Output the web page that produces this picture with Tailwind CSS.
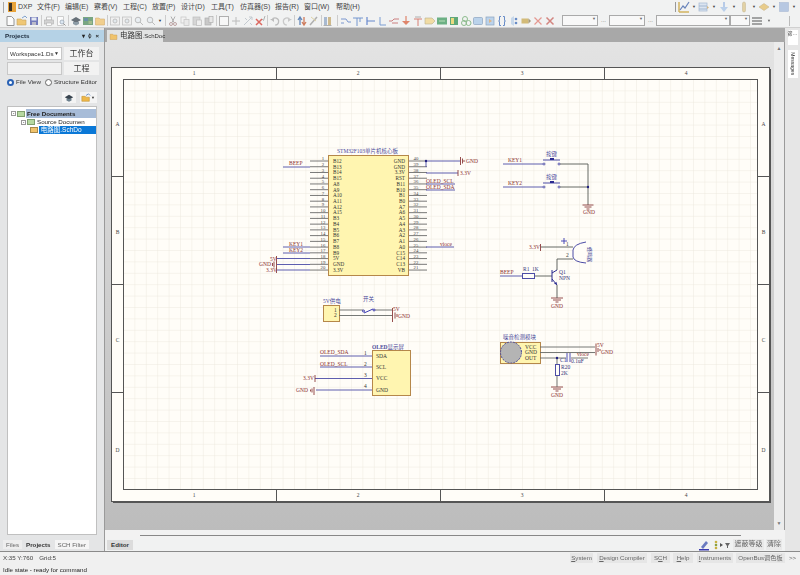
<!DOCTYPE html>
<html lang="zh">
<head>
  <meta charset="UTF-8">
  <title>电路图.SchDoc</title>
  <script src="https://cdn.jsdelivr.net/npm/@tailwindcss/browser@4"></script>
</head>
<body class="w-[800px] h-[575px] overflow-hidden bg-[#eef0f0] text-[6.2px] text-[#333] blur-[0.35px] whitespace-nowrap font-['Liberation_Sans','Noto_Sans_CJK_SC',sans-serif]">

<!-- toolbar icons -->
<svg class="hidden">
  <symbol id="new" viewBox="0 0 12 12"><path d="M3 1.5h4.5L10 4v6.5H3z" fill="#fff" stroke="#777"/></symbol>
  <symbol id="open" viewBox="0 0 12 12"><path d="M1 4h4l1 1h4v5H1z" fill="#eeb84a" stroke="#b98a2c" stroke-width=".6"/><path d="M6 3l3-2 2 2" fill="none" stroke="#5a86c0"/></symbol>
  <symbol id="save" viewBox="0 0 12 12"><rect x="2" y="2" width="8" height="8" fill="#4a55a8"/><rect x="3.5" y="2.5" width="5" height="3" fill="#dfe4f2"/><rect x="4" y="7" width="4" height="3" fill="#aab"/></symbol>
  <symbol id="print" viewBox="0 0 12 12"><path d="M3.5 2h5v3h-5z" fill="#fff" stroke="#999" stroke-width=".7"/><rect x="1.5" y="5" width="9" height="4" fill="#c9c9c9" stroke="#999" stroke-width=".6"/><rect x="3.5" y="8" width="5" height="2.5" fill="#fff" stroke="#999" stroke-width=".6"/></symbol>
  <symbol id="preview" viewBox="0 0 12 12"><path d="M2.5 1.5h6v9h-6z" fill="#fff" stroke="#aaa" stroke-width=".7"/><circle cx="7" cy="7" r="2" fill="#d5e3f2" stroke="#789" stroke-width=".7"/><path d="M8.5 8.5l2 2" stroke="#777"/></symbol>
  <symbol id="cap" viewBox="0 0 12 12"><path d="M1 5l5-3 5 3-5 3z" fill="#38444f"/><path d="M3 7v2l3 1.5L9 9V7" fill="#6b7f8c"/></symbol>
  <symbol id="chips" viewBox="0 0 12 12"><rect x="1" y="2" width="10" height="8" fill="#4f8d5c"/><rect x="2" y="3" width="4" height="3" fill="#3c6f8e"/><rect x="6.5" y="6" width="3.5" height="3" fill="#86a86b"/></symbol>
  <symbol id="folder" viewBox="0 0 12 12"><path d="M1.5 3h3.500l1 1h4.500v6h-9z" fill="#f0c36c" stroke="#c9974a" stroke-width=".6"/></symbol>
  <symbol id="zoomfit" viewBox="0 0 12 12"><rect x="1.500" y="2" width="9" height="8" fill="#eee" stroke="#aaa" stroke-width=".7"/><circle cx="6" cy="6" r="2" fill="#dde5ea" stroke="#999" stroke-width=".7"/></symbol>
  <symbol id="zoomin" viewBox="0 0 12 12"><circle cx="5" cy="5" r="2.800" fill="#e6edf2" stroke="#aaa"/><path d="M7 7l3 3" stroke="#aaa"/></symbol>
  <symbol id="cut" viewBox="0 0 12 12"><path d="M4 1.500l3 6M8 1.500l-3 6" stroke="#999"/><circle cx="4" cy="9" r="1.500" fill="none" stroke="#a88"/><circle cx="8" cy="9" r="1.500" fill="none" stroke="#a88"/></symbol>
  <symbol id="copy" viewBox="0 0 12 12"><rect x="2" y="2" width="5" height="6" fill="#f2f2f2" stroke="#b5b5b5" stroke-width=".7"/><rect x="5" y="4.500" width="5" height="6" fill="#e6e6e6" stroke="#b5b5b5" stroke-width=".7"/></symbol>
  <symbol id="paste" viewBox="0 0 12 12"><rect x="2" y="2" width="7" height="8" fill="#ccc" stroke="#aaa" stroke-width=".7"/><rect x="5.500" y="5" width="5" height="5.500" fill="#eee" stroke="#aaa" stroke-width=".7"/></symbol>
  <symbol id="stamp" viewBox="0 0 12 12"><rect x="2" y="3" width="6" height="7" fill="#bbb" stroke="#999" stroke-width=".7"/><rect x="6" y="1.500" width="4" height="6" fill="#e5e5e5" stroke="#999" stroke-width=".7"/></symbol>
  <symbol id="rect" viewBox="0 0 12 12"><rect x="1.500" y="1.500" width="9" height="9" fill="#f8f8f8" stroke="#999"/></symbol>
  <symbol id="cross" viewBox="0 0 12 12"><path d="M6 2v8M2 6h8" stroke="#aaa"/></symbol>
  <symbol id="xmove" viewBox="0 0 12 12"><path d="M2 10l8-8M7 2h3v3" fill="none" stroke="#b5bcc4"/><path d="M3 3l2 2M8 8l2 2" stroke="#b5bcc4"/></symbol>
  <symbol id="xred" viewBox="0 0 12 12"><path d="M2 4l6 6M8 4l-6 6" stroke="#d43a2f" stroke-width="1.500"/><path d="M8 4l1.500 1.500L11 1" fill="none" stroke="#999"/></symbol>
  <symbol id="undo" viewBox="0 0 12 12"><path d="M3 5a3.500 3.500 0 1 1 3 5" fill="none" stroke="#aaa" stroke-width="1.200"/><path d="M1 4h4v3z" fill="#aaa"/></symbol>
  <symbol id="redo" viewBox="0 0 12 12"><path d="M9 5a3.500 3.500 0 1 0-3 5" fill="none" stroke="#bbb" stroke-width="1.200"/><path d="M11 4H7v3z" fill="#bbb"/></symbol>
  <symbol id="updown" viewBox="0 0 12 12"><path d="M4 10V3M2 5l2-3 2 3" fill="none" stroke="#3465a8" stroke-width="1.300"/><path d="M8 2v7M6 7l2 3 2-3" fill="none" stroke="#c2552c" stroke-width="1.300"/></symbol>
  <symbol id="wand" viewBox="0 0 12 12"><path d="M2 10l7-8" stroke="#999" stroke-width="1.500"/><path d="M3 2l5 4" stroke="#d8c98a"/></symbol>
  <symbol id="binoc" viewBox="0 0 12 12"><rect x="2" y="2" width="3" height="8" fill="#8fa6c4"/><rect x="6" y="2" width="3" height="8" fill="#c2a66a"/><rect x="1.500" y="10" width="8" height="1" fill="#999"/></symbol>
  <symbol id="wire" viewBox="0 0 12 12"><path d="M1 4h5l2 3h3M1 8h3" fill="none" stroke="#5479c4"/></symbol>
  <symbol id="bus" viewBox="0 0 12 12"><path d="M1 3h10M5 3v8M8 3v4" fill="none" stroke="#4d78c4"/></symbol>
  <symbol id="hbar" viewBox="0 0 12 12"><path d="M3 2v8M3 6h8" fill="none" stroke="#3b66c0" stroke-width="1.200"/></symbol>
  <symbol id="corner" viewBox="0 0 12 12"><path d="M4 2v8M4 10h6" fill="none" stroke="#5480c8"/></symbol>
  <symbol id="bent" viewBox="0 0 12 12"><path d="M1 6h3l2-2h5M4 8h6" fill="none" stroke="#c05a5a"/></symbol>
  <symbol id="gnd" viewBox="0 0 12 12"><path d="M6 1v6" stroke="#d9603e" stroke-width="1.200"/><path d="M2 6h8L6 10z" fill="#d9603e"/></symbol>
  <symbol id="vcc" viewBox="0 0 12 12"><path d="M2 4h8M6 4v7" stroke="#cf5a4a"/><path d="M3 2h6" stroke="#999"/></symbol>
  <symbol id="tag" viewBox="0 0 12 12"><path d="M1 3h7l3 3-3 3H1z" fill="#f0d48a" stroke="#aa9a6a" stroke-width=".6"/></symbol>
  <symbol id="greenb" viewBox="0 0 12 12"><rect x="1" y="2.500" width="10" height="7" fill="#3f9a5f"/><path d="M3 6h6" stroke="#a8d8a8"/></symbol>
  <symbol id="yellowg" viewBox="0 0 12 12"><rect x="2" y="2" width="8" height="8" fill="#2f8f50"/><rect x="3" y="3" width="3" height="6" fill="#e8d25a"/></symbol>
  <symbol id="rings" viewBox="0 0 12 12"><circle cx="5" cy="4" r="2.500" fill="none" stroke="#6aa86a"/><circle cx="4" cy="8" r="2.500" fill="none" stroke="#6aa86a"/><circle cx="8.500" cy="8" r="2.500" fill="none" stroke="#6aa86a"/></symbol>
  <symbol id="bluebox" viewBox="0 0 12 12"><rect x="1.500" y="2.500" width="9" height="7" rx="1" fill="#a9c8e8" stroke="#6a8ab0" stroke-width=".7"/></symbol>
  <symbol id="sheet" viewBox="0 0 12 12"><rect x="2" y="2" width="8" height="8" fill="#a9c8e8" stroke="#6a8ab0" stroke-width=".7"/><path d="M5 4l3 2-3 2z" fill="#d8a060"/></symbol>
  <symbol id="brace" viewBox="0 0 12 12"><path d="M5 1.500H3.500v4L2.500 6l1 .5v4H5M7 1.500h1.500v4l1 .5-1 .5v4H7" fill="none" stroke="#3a6ab8"/></symbol>
  <symbol id="arrows" viewBox="0 0 12 12"><path d="M3 3l3-2v10l-3-2z" fill="#b8cfe8"/><circle cx="8" cy="4" r="1.300" fill="#3a6ab8"/><circle cx="8" cy="8" r="1.300" fill="#3a6ab8"/></symbol>
  <symbol id="pencil" viewBox="0 0 12 12"><rect x="1.500" y="3.500" width="7" height="5" fill="#c9a850"/><path d="M8.500 3.500L11 6 8.500 8.500z" fill="#8a7a50"/></symbol>
  <symbol id="xpale" viewBox="0 0 12 12"><path d="M2.500 2.500l7 7M9.500 2.500l-7 7" stroke="#e07a70" stroke-width="1.200"/></symbol>
  <symbol id="xbox" viewBox="0 0 12 12"><path d="M2.500 2.500l7 7M9.500 2.500l-7 7" stroke="#c9605a" stroke-width="1.500"/></symbol>
  <symbol id="chart" viewBox="0 0 12 12"><path d="M1 11V1M1 11h10" stroke="#c9a030" stroke-width="1.500"/><path d="M2 9l3-4 2 2 4-6" fill="none" stroke="#3a5ea8" stroke-width="1.200"/></symbol>
  <symbol id="stack" viewBox="0 0 12 12"><rect x="1" y="2" width="8" height="8" fill="#d4e0f0" stroke="#8aa5c8" stroke-width=".7"/><path d="M1 5h8M1 8h8" stroke="#8aa5c8"/><path d="M9 5l2 1.500L9 8z" fill="#c9a060"/></symbol>
  <symbol id="down" viewBox="0 0 12 12"><path d="M6 1v8" stroke="#8aaee0" stroke-width="1.500"/><path d="M2 6h8l-4 5z" fill="#a8c4e8"/></symbol>
  <symbol id="vtan" viewBox="0 0 12 12"><rect x="4.500" y="1" width="3" height="10" rx="1.500" fill="#ddc68a" stroke="#b5a070" stroke-width=".5"/></symbol>
  <symbol id="diamond" viewBox="0 0 12 12"><path d="M1 6l5-3.500L11 6 6 9.500z" fill="#e6c069" stroke="#b59a60" stroke-width=".5"/></symbol>
  <symbol id="square" viewBox="0 0 12 12"><rect x="1.500" y="1.500" width="9" height="9" fill="#a4bbdd" stroke="#8aa0c4" stroke-width=".5"/></symbol>
  <symbol id="lines" viewBox="0 0 12 12"><path d="M1 3h10M1 6h10M1 9h10" stroke="#555" stroke-width="1.200"/></symbol>
</svg>

<!-- menu bar -->
<header class="flex items-center h-[14px] pl-[3px] bg-[#f1f2f2] text-[7px] text-[#444]">
  <span class="w-px h-[11px] bg-[#aaa] mr-1"></span>
  <svg class="w-[8px] h-[10px] shrink-0" viewBox="0 0 8 10"><rect width="8" height="10" fill="#e8a33a"/><rect x="1" y="1" width="3" height="8" fill="#3a3024"/></svg>
  <span class="ml-[2px] w-[19px]">DXP</span>
  <span class="w-[28px]">文件(F)</span>
  <span class="w-[29px]">编辑(E)</span>
  <span class="w-[29px]">察看(V)</span>
  <span class="w-[29px]">工程(C)</span>
  <span class="w-[29px]">放置(P)</span>
  <span class="w-[30px]">设计(D)</span>
  <span class="w-[29px]">工具(T)</span>
  <span class="w-[35px]">仿真器(S)</span>
  <span class="w-[29px]">报告(R)</span>
  <span class="w-[32px]">窗口(W)</span>
  <span>帮助(H)</span>
  <div class="ml-auto flex items-center pr-[2px]" id="topIcons">
    <span class="w-px h-[10px] bg-[#999] mr-[2px]"></span>
  </div>
</header>

<!-- tool bar -->
<div id="tools" class="flex items-center h-[14px] pl-[4px] bg-[#f1f2f2] border-b border-[#d0d0d0]"></div>

<div class="flex h-[523px]">
  <!-- projects panel -->
  <aside class="w-[105px] shrink-0 flex flex-col pt-[2px] bg-[#e4e5e6] border-r border-[#9a9a9a]">
    <div class="flex items-center h-[12px] px-[5px] bg-[#b5d2e6] text-[#1c2a3a] font-bold">
      <span>Projects</span>
      <span class="ml-auto flex items-center gap-[3px] text-[6px] text-[#222]"><span>▾</span><span>ᛰ</span><span>×</span></span>
    </div>
    <div class="flex flex-col px-[7px] pt-[5px] flex-1">
      <div class="flex gap-[2px]">
        <div class="w-[55px] shrink-0 h-[13px] flex items-center justify-between px-[2px] bg-white border border-[#c8c8c8]"><span>Workspace1.Ds</span><span class="text-[5px]">▼</span></div>
        <button class="w-[35px] shrink-0 h-[13px] bg-[#f2f2f2] text-[8px]">工作台</button>
      </div>
      <div class="flex gap-[2px] mt-[2px]">
        <div class="w-[55px] shrink-0 h-[13px] bg-[#f1f1f1] border border-[#c8c8c8]"></div>
        <button class="w-[35px] shrink-0 h-[13px] bg-[#f2f2f2] text-[8px]">工程</button>
      </div>
      <div class="flex items-center mt-px h-[12px]">
        <span class="w-[7px] h-[7px] rounded-full bg-white border-2 border-[#2a62b5]"></span>
        <span class="ml-[2px]">File View</span>
        <span class="ml-[4px] w-[7px] h-[7px] rounded-full bg-white border border-[#666]"></span>
        <span class="ml-[2px]">Structure Editor</span>
      </div>
      <div class="flex justify-end gap-[4px] mt-[4px]">
        <div class="w-[14px] h-[11px] bg-[#f4f4f4] flex justify-center items-center"><svg class="w-[10px] h-[10px]"><use href="#cap"/></svg></div>
        <div class="w-[17px] h-[11px] bg-[#f4f4f4] flex items-center pl-px"><svg class="w-[10px] h-[10px]"><use href="#open"/></svg><span class="text-[4px]">▼</span></div>
      </div>
      <div class="mt-[3px] h-[429px] bg-white border border-[#c0c0c0] pt-[2px] text-[#222]">
        <div class="flex items-center h-[9px] pl-[3px]">
          <span class="w-[5px] h-[5px] border border-[#999] text-[5px] leading-[3px] text-center">-</span>
          <span class="w-[8px] h-[6px] ml-px bg-[#b6d8a0] border border-[#7f9f6f]"></span>
          <span class="ml-px pl-px w-[71px] bg-[#a7bcd8] font-bold leading-[9px]">Free Documents</span>
        </div>
        <div class="flex items-center h-[8px] pl-[13px]">
          <span class="w-[5px] h-[5px] border border-[#999] text-[5px] leading-[3px] text-center">-</span>
          <span class="w-[8px] h-[6px] ml-px bg-[#b6d8a0] border border-[#7f9f6f]"></span>
          <span class="ml-[2px]">Source Documen</span>
        </div>
        <div class="flex items-center h-[8px] pl-[22px]">
          <span class="w-[8px] h-[6px] bg-[#f0c36c] border border-[#a8894a]"></span>
          <span class="ml-px pl-[2px] w-[59px] bg-[#0a78d7] text-white text-[6.500px] leading-[8px]">电路图.SchDo</span>
        </div>
      </div>
    </div>
    <div class="flex items-center h-[16px] pl-[3px] pt-[5px] pb-[2px] gap-[1px] text-[#666]">
      <span class="px-[3px] h-[9px] leading-[9px] bg-[#eee]">Files</span>
      <span class="px-[3px] h-[9px] leading-[9px] font-bold text-[#333]">Projects</span>
      <span class="px-[3px] h-[9px] leading-[9px] bg-[#f5f5f5]">SCH Filter</span>
    </div>
  </aside>

  <!-- document area -->
  <main class="flex-1 flex flex-col min-w-0 bg-[#e8e8e8]">
    <div class="flex items-end h-[14px] bg-[#a8a8a8] pl-[2px]">
      <div class="flex items-center gap-[2px] h-[12px] w-[56px] pl-[2px] bg-[#e2e3e3]">
        <svg class="w-[9px] h-[9px] shrink-0"><use href="#folder"/></svg>
        <span class="text-[7.500px]">电路图<span class="text-[6px]">.SchDoc</span></span>
      </div>
    </div>
    <div class="flex flex-1 min-h-0">
      <svg id="sheet" class="w-[669px] h-[488px] shrink-0" viewBox="105 42 669 488" font-family="'Liberation Serif','Noto Sans CJK SC',serif" font-size="5.500">
        <defs>
          <linearGradient id="back" x1="0" y1="0" x2="0" y2="1"><stop offset="0" stop-color="#e3e3e3"/><stop offset="1" stop-color="#bcbcbc"/></linearGradient>
          <pattern id="grid" x="123" y="79" width="11.400" height="11.400" patternUnits="userSpaceOnUse"><path d="M11.400 0H0V11.400" fill="none" stroke="#ece8de" stroke-width=".9"/></pattern>
        </defs>
        <rect x="105" y="42" width="669" height="488" fill="url(#back)"/>
        <rect x="113" y="69" width="658" height="434" fill="#555"/>
        <rect x="111.500" y="67.500" width="658" height="434" fill="#fffdf8" stroke="#555"/>
        <rect x="123.500" y="79.500" width="634" height="410" fill="#fffdf8"/>
        <rect x="123.500" y="79.500" width="634" height="410" fill="url(#grid)" stroke="#555"/>
        <g stroke="#555" fill="none">
          <path d="M276.500 68v11M440.500 68v11M604.500 68v11M276.500 490v11M440.500 490v11M604.500 490v11"/>
          <path d="M112 176.500h11M112 284.500h11M112 392.500h11M758 176.500h11M758 284.500h11M758 392.500h11"/>
        </g>
        <g fill="#444" text-anchor="middle">
          <text x="194" y="75">1</text><text x="358" y="75">2</text><text x="522" y="75">3</text><text x="686" y="75">4</text>
          <text x="194" y="497">1</text><text x="358" y="497">2</text><text x="522" y="497">3</text><text x="686" y="497">4</text>
          <text x="117.500" y="126">A</text><text x="117.500" y="234">B</text><text x="117.500" y="342">C</text><text x="117.500" y="452">D</text>
          <text x="763.500" y="126">A</text><text x="763.500" y="234">B</text><text x="763.500" y="342">C</text><text x="763.500" y="452">D</text>
        </g>

        <!-- MCU module -->
        <rect x="328.500" y="155.500" width="80" height="120" fill="#fff5b0" stroke="#b5874a"/>
        <text x="337" y="153" fill="#4a4a9a">STM32F103单片机核心板</text>
        <g id="pins" font-size="5.200"></g>

        <g stroke="#4c4ca6" stroke-width=".9" fill="none">
          <path d="M283 167h27M283 247h27M283 253h27M277 258.500h33M277 264.500h33M277 270h33"/>
          <path d="M426 161h34M426 161v6M426 173h32M426 184h29M426 190h29M426 247h28"/>
        </g>
        <circle cx="426" cy="161" r="1.200" fill="#202080"/>
        <g stroke="#8b3a3a" stroke-width=".9" fill="none">
          <path d="M276.500 256v17M274 261.500v6M272.500 263v3M458 170v6M460.500 157v8M462.500 158.500v5M464 160v2"/>
        </g>
        <g fill="#8b3030">
          <text x="289" y="165">BEEP</text><text x="289" y="245.500">KEY1</text><text x="289" y="251.500">KEY2</text>
          <text x="270" y="260.500">5V</text><text x="259" y="266">GND</text><text x="266" y="271.500">3.3V</text>
          <text x="466" y="163">GND</text><text x="460" y="175">3.3V</text>
          <text x="426" y="183">OLED_SCL</text><text x="426" y="189">OLED_SDA</text><text x="440" y="245.500">vioce</text>
        </g>

        <!-- keys -->
        <g stroke="#4c4ca6" stroke-width=".9" fill="none">
          <path d="M503 164h40M503 187h40"/>
          <circle cx="544" cy="164" r="1"/><circle cx="559" cy="164" r="1"/><circle cx="544" cy="187" r="1"/><circle cx="559" cy="187" r="1"/>
          <path d="M543 160h17M543 183h17" stroke-width="1.200"/>
        </g>
        <path d="M550 158h4v2h-4zM550 181h4v2h-4z" fill="#2a2a90"/>
        <path d="M560 164h28v41M560 187h28" fill="none" stroke="#555a55" stroke-width=".9"/>
        <circle cx="588" cy="187" r="1.200" fill="#202080"/>
        <g stroke="#8b3a3a" stroke-width=".9"><path d="M582.500 205h11M584.500 207h7M586.500 209h3M551 298h12M553 300h8M555.500 302h3M551 387h12M553 389h8M555.500 391h3"/></g>
        <g fill="#8b3030"><text x="508" y="162">KEY1</text><text x="508" y="185">KEY2</text><text x="583" y="214">GND</text></g>
        <g fill="#4a4a9a"><text x="546" y="156">按键</text><text x="546" y="179">按键</text></g>

        <!-- buzzer -->
        <path d="M541 247h32M557 259h16M557 259v11M557 285v13M535 276h17" stroke="#555a55" stroke-width=".9" fill="none"/>
        <path d="M540.500 244v7" stroke="#8b3a3a" stroke-width=".9"/>
        <path d="M561 241h6M564 238v6" stroke="#3a3ab0" stroke-width=".9"/>
        <path d="M586 242Q574 244 573 250V257Q574 262 586 263" fill="#fffdf8" stroke="#4c4ca6"/>
        <text transform="translate(588 247) rotate(90)" fill="#4a4a9a" font-size="5">蜂鸣器</text>
        <path d="M500 276h22" stroke="#4c4ca6" stroke-width=".9"/>
        <rect x="522.500" y="273.500" width="12" height="5" fill="#fffdf8" stroke="#4c4ca6"/>
        <path d="M552 270v12M552 273l5-3M552 279l5 6" stroke="#2a2a90" fill="none"/>
        <path d="M554 283.500l3 1.500-.5-3z" fill="#2a2a90"/>
        <g fill="#444"><text x="529" y="248.500" fill="#8b3030">3.3V</text><text x="566" y="246">1</text><text x="566" y="257">2</text></g>
        <g fill="#8b3030"><text x="500" y="273.500">BEEP</text><text x="551" y="307.500">GND</text></g>
        <g fill="#33337a"><text x="523" y="271">R1</text><text x="532" y="271">1K</text><text x="559" y="274">Q1</text><text x="559" y="280">NPN</text></g>

        <!-- power switch -->
        <rect x="323.500" y="305.500" width="16" height="16" fill="#fff5b0" stroke="#b5874a"/>
        <text x="323" y="303" fill="#4a4a9a">5V供电</text>
        <text x="334" y="312" fill="#333">1</text><text x="334" y="317" fill="#333">2</text>
        <path d="M339 310h24M375 310h17M339 315.500h53" stroke="#666a66" stroke-width=".9" fill="none"/>
        <path d="M364 313l9-4" stroke="#3a3ab0"/><circle cx="363.500" cy="311" r="1" fill="none" stroke="#3a3ab0"/><circle cx="374" cy="310" r="1" fill="none" stroke="#3a3ab0"/>
        <path d="M392.500 308v14M395 312.500v6M397 314v3" stroke="#8b3a3a" stroke-width=".9"/>
        <text x="363" y="301" fill="#4a4a9a">开关</text>
        <text x="393" y="311" fill="#8b3030">5V</text><text x="398" y="317.500" fill="#8b3030">GND</text>

        <!-- OLED -->
        <rect x="372.500" y="350.500" width="38" height="45" fill="#fff5b0" stroke="#b5874a"/>
        <text x="372" y="348.500" fill="#4a4a9a"><tspan font-weight="bold">OLED</tspan>显示屏</text>
        <g fill="#333"><text x="376" y="358">SDA</text><text x="376" y="369">SCL</text><text x="376" y="380">VCC</text><text x="376" y="391.500">GND</text>
        <text x="364" y="354.500">1</text><text x="364" y="366">2</text><text x="364" y="377">3</text><text x="364" y="388">4</text></g>
        <path d="M320 356h52M320 367h52M315 378.500h57M316 390h56" stroke="#4c4ca6" stroke-width=".9"/>
        <path d="M315 375v7M314 387v8M312 388.500v4M310.500 389.500v2" stroke="#8b3a3a" stroke-width=".9"/>
        <g fill="#8b3030"><text x="320" y="354">OLED_SDA</text><text x="320" y="365.500">OLED_SCL</text><text x="303" y="380">3.3V</text><text x="296" y="391.500">GND</text></g>

        <!-- sound sensor -->
        <rect x="500.500" y="342.500" width="40" height="21" fill="#fff5b0" stroke="#b5874a"/>
        <circle cx="511" cy="352.500" r="10.500" fill="#b4b4b4" stroke="#4a4a9a" stroke-dasharray="2 1"/>
        <text x="503" y="339" fill="#4a4a9a">噪音检测模块</text>
        <g fill="#333"><text x="525" y="348.500">VCC</text><text x="525" y="354">GND</text><text x="525" y="359.500">OUT</text></g>
        <path d="M540 347h55M540 352.500h55M540 358h26M571 358h17M557 358v6M557 375v12" stroke="#666a66" stroke-width=".9" fill="none"/>
        <path d="M596 343.500v12M598 348v4M600 349v2" stroke="#8b3a3a" stroke-width=".9"/>
        <path d="M567 353v9M570 353v9" stroke="#3a3ab0" stroke-width=".9"/>
        <circle cx="557" cy="358" r="1.200" fill="#202080"/>
        <rect x="555.500" y="364.500" width="4" height="11" fill="#fffdf8" stroke="#4c4ca6"/>
        <g fill="#33337a"><text x="560" y="362">C1</text><text x="571" y="362.500">0.1uF</text><text x="561" y="369">R20</text><text x="561" y="375">2K</text></g>
        <g fill="#8b3030"><text x="597" y="347">5V</text><text x="601" y="354">GND</text><text x="577" y="356">vioce</text><text x="551" y="397">GND</text></g>
      </svg>
      <div class="flex-1 flex flex-col items-center bg-[#ececec] border-r border-[#9a9a9a] text-[5px] text-[#777] py-[3px]">
        <span>▲</span>
        <span class="mt-auto">▼</span>
      </div>
    </div>
    <div class="h-[9px] bg-[#f2f2f2] pt-[5px] pl-[35px] pr-[44px]"><div class="h-[1px] bg-[#888]"></div></div>
    <div class="flex items-center h-[12px] pb-px bg-[#f1f2f2]">
      <span class="ml-[2px] px-[4px] h-[10px] leading-[10px] bg-[#dcdcdc] font-bold">Editor</span>
      <div class="ml-auto flex items-center gap-[2px] pr-[3px] text-[#666]">
        <svg class="w-[12px] h-[12px] shrink-0" viewBox="0 0 12 12"><path d="M3 8l5-6 2 2-5 6z" fill="#6a7ac0"/><path d="M1 10h10v1.500H1z" fill="#3a3ab0"/></svg>
        <svg class="ml-[2px] w-[17px] h-[10px] shrink-0" viewBox="0 0 17 10"><circle cx="2" cy="2" r="1.300" fill="#c9b040"/><circle cx="2" cy="5" r="1.300" fill="#8aa040"/><circle cx="2" cy="8" r="1.300" fill="#c9b040"/><path d="M6 3l3 2-3 2z" fill="#555"/><path d="M11 3h5l-2 3v2h-1V6z" fill="#666"/></svg>
        <span class="w-[31px] text-[7px] text-center bg-[#e9e9e9]">遮蔽等级</span>
        <span class="w-[16px] text-[7px] text-center bg-[#e9e9e9]">清除</span>
      </div>
    </div>
  </main>

  <!-- right dock -->
  <div class="w-[15px] shrink-0 flex flex-col items-center pt-[2px] gap-[5px] bg-[#e6e6e6]">
    <span class="w-[10px] h-[15px] bg-white text-center leading-[6px] text-[5px]">筛…</span>
    <span class="w-[10px] h-[28px] bg-white text-[5px] flex items-center justify-center"><span class="rotate-90">Messages</span></span>
  </div>
</div>

<!-- status bar -->
<footer class="h-[24px] border-t border-[#8a8a8a] bg-[#f0f0f0]">
  <div class="flex items-center h-[12px] pl-[3px] pr-[3px] text-[#444]">
    <span>X:35 Y:760</span><span class="ml-[6px]">Grid:5</span>
    <div class="ml-auto flex items-center text-[#666]">
      <span class="w-[23px] text-center bg-[#e6e6e6]"><u>S</u>ystem</span>
      <span class="ml-[4px] w-[50px] text-center bg-[#e6e6e6]"><u>D</u>esign Compiler</span>
      <span class="ml-[4px] w-[19px] text-center bg-[#e6e6e6]">S<u>C</u>H</span>
      <span class="ml-[3px] w-[20px] text-center bg-[#e6e6e6]"><u>H</u>elp</span>
      <span class="ml-[4px] w-[36px] text-center bg-[#e6e6e6]"><u>I</u>nstruments</span>
      <span class="ml-[3px] w-[49px] text-center bg-[#e6e6e6]">OpenBus调色板</span>
      <span class="ml-[3px] w-[9px] text-center">&gt;&gt;</span>
    </div>
  </div>
  <div class="h-[11px] leading-[11px] pl-[3px] text-[#222]">Idle state - ready for command</div>
</footer>

<script>
  // tool bar: ids are drawn from the symbols above, "|" is a separator of the given width
  const tools = ['new','open','save','|3','print','preview','|3','cap','chips','folder','|3','zoomfit','zoomfit','zoomin','zoomin','v',
    '|4','cut','copy','paste','stamp','|3','rect','cross','xmove','xred','|3','undo','redo','|3','updown','wand','|2','binoc','|6',
    'wire','bus','hbar','corner','bent','gnd','vcc','tag','greenb','yellowg','rings','bluebox','sheet','brace','arrows','pencil','xpale','xbox'];
  let html = '';
  tools.forEach(t => {
    if (t[0] === '|') html += `<span class="shrink-0 flex justify-center" style="width:${t.slice(1)}px"><span class="w-px h-[11px] bg-[#ccc]"></span></span>`;
    else if (t === 'v') html += '<span class="w-[6px] text-[4px] text-center">▼</span>';
    else html += `<svg class="w-3 h-3 shrink-0 opacity-75"><use href="#${t}"/></svg>`;
  });
  html += '<span class="ml-[6px] w-[36px] h-[11px] bg-[#f8f8f8] border border-[#aaa] text-[4px] text-right pr-px text-[#666]">▼</span>';
  html += '<span class="mx-[3px] text-[6px] text-[#777]">...</span>';
  html += '<span class="w-[36px] h-[11px] bg-[#f8f8f8] border border-[#aaa] text-[4px] text-right pr-px text-[#666]">▼</span>';
  html += '<span class="mx-[3px] text-[6px] text-[#777]">...</span>';
  html += '<span class="w-[74px] h-[11px] bg-[#f8f8f8] border border-[#aaa] text-[4px] text-right pr-px text-[#666]">▼</span>';
  html += '<span class="w-[20px] h-[11px] bg-[#f8f8f8] border border-[#aaa] text-[4px] text-right pr-px text-[#666]">▼</span>';
  html += '<svg class="ml-[1px] w-3 h-3 shrink-0"><use href="#lines"/></svg>';
  html += '<span class="ml-[4px] w-[6px] text-[4px] text-[#666]">▼</span>';
  html += '<span class="ml-[16px] w-px h-[10px] bg-[#bbb]"></span>';
  document.getElementById('tools').innerHTML = html;

  let top_ = document.getElementById('topIcons');
  ['chart','stack','down','vtan','diamond','square'].forEach(t => {
    top_.innerHTML += `<svg class="w-3 h-3 shrink-0 opacity-75"><use href="#${t}"/></svg><span class="w-[8px] text-[4px] text-center">▼</span>`;
  });

  // MCU pins
  const left = ['B12','B13','B14','B15','A8','A9','A10','A11','A12','A15','B3','B4','B5','B6','B7','B8','B9','5V','GND','3.3V'];
  const right = ['GND','GND','3.3V','RST','B11','B10','B1','B0','A7','A6','A5','A4','A3','A2','A1','A0','C15','C14','C13','VB'];
  let pins = '';
  for (let i = 0; i < 20; i++) {
    const y = 161 + i * 5.74;
    pins += `<path d="M310 ${y}h18M409 ${y}h18" stroke="#555" stroke-width=".8"/>`;
    pins += `<text x="333" y="${y + 1.8}" fill="#333">${left[i]}</text>`;
    pins += `<text x="405" y="${y + 1.8}" fill="#333" text-anchor="end">${right[i]}</text>`;
    pins += `<text x="323" y="${y - 0.6}" fill="#444" text-anchor="middle" font-size="4.800">${i + 1}</text>`;
    pins += `<text x="416" y="${y - 0.6}" fill="#444" text-anchor="middle" font-size="4.800">${40 - i}</text>`;
  }
  document.getElementById('pins').innerHTML = pins;
</script>
</body>
</html>
